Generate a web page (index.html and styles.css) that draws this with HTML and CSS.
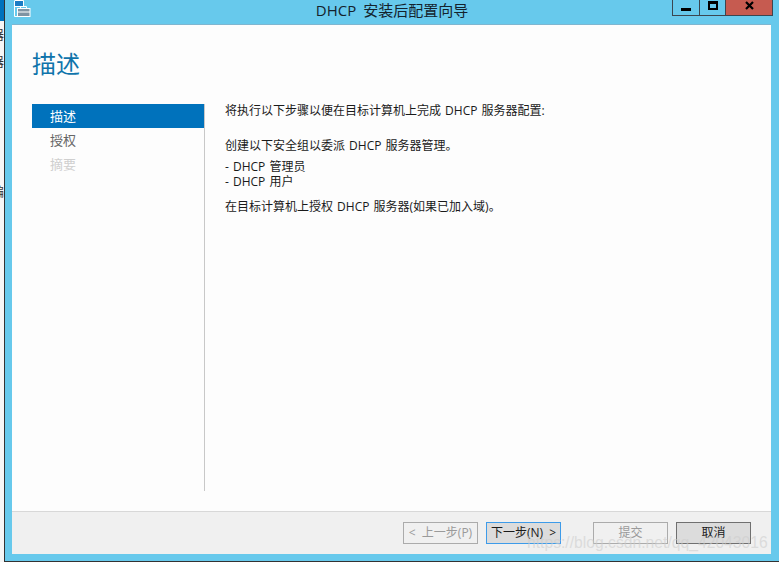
FILE: index.html
```html
<!DOCTYPE html>
<html lang="zh-CN">
<head>
<meta charset="utf-8">
<title>DHCP 安装后配置向导</title>
<link rel="stylesheet" href="styles.css">
</head>
<body>
<div class="desktop">
  <div class="strip">
    <div class="strip-top"></div>
    <span class="frag frag-a">器</span>
    <span class="frag frag-b">器</span>
    <span class="frag frag-c">编</span>
  </div>
  <div class="window">
    <header class="titlebar">
      <svg class="app-icon" width="17" height="17" viewBox="0 0 17 17" aria-hidden="true">
        <rect x="1" y="1" width="8" height="6" fill="#1b7cc4"/>
        <path d="M.5 1V16.500H3.500M.5 .5H9.500V6M1 6.500H9" fill="none" stroke="#fff"/>
        <rect x="3.500" y="8.500" width="12.500" height="8" fill="#7f93a3" stroke="#fff"/>
        <path d="M6.500 8.500V6.500H12.500V8.500" fill="none" stroke="#fff"/>
        <path d="M4 12H16" stroke="#fff"/>
      </svg>
      <div class="title">DHCP 安装后配置向导</div>
      <div class="controls">
        <div class="ctl ctl-min"><span class="min-glyph"></span></div>
        <div class="ctl ctl-max"><span class="max-glyph"></span></div>
        <div class="ctl ctl-close">
          <svg width="9" height="9" viewBox="0 0 9 9" aria-hidden="true"><path d="M1 1l7 7M8 1L1 8" stroke="#000" stroke-width="2.200"/></svg>
        </div>
      </div>
    </header>
    <div class="client">
      <main class="main">
        <h1 class="heading">描述</h1>
        <div class="columns">
          <nav class="nav">
            <div class="nav-item nav-active">描述</div>
            <div class="nav-item nav-normal">授权</div>
            <div class="nav-item nav-disabled">摘要</div>
          </nav>
          <section class="content">
            <p class="line first">将执行以下步骤以便在目标计算机上完成 DHCP 服务器配置:</p>
            <p class="line second">创建以下安全组以委派 DHCP 服务器管理。</p>
            <div class="list">
              <p class="line">- DHCP 管理员</p>
              <p class="line">- DHCP 用户</p>
            </div>
            <p class="line last">在目标计算机上授权 DHCP 服务器(如果已加入域)。</p>
          </section>
        </div>
      </main>
      <footer class="footer">
        <button class="btn btn-disabled" type="button">&lt; 上一步(P)</button>
        <button class="btn btn-focus" type="button">下一步(N) &gt;</button>
        <button class="btn btn-disabled btn-commit" type="button">提交</button>
        <button class="btn btn-cancel" type="button">取消</button>
      </footer>
    </div>
    <div class="watermark">https://blog.csdn.net/qq_42043016</div>
  </div>
</div>
</body>
</html>
```
FILE: styles.css
```css
* { box-sizing: border-box; }
html, body { margin: 0; padding: 0; width: 779px; height: 562px; overflow: hidden; }
body { font-family: "Open Sans", "Noto Sans CJK SC", sans-serif; font-size: 12px; color: #1a1a1a; }
.desktop { display: flex; width: 779px; height: 562px; background: #f6f6f6; }
.strip { position: relative; width: 4px; flex: none; overflow: hidden; background: #f6f6f6; }
.strip-top { height: 21px; background: #0072bc; }
.frag { position: absolute; left: -9px; font-size: 13px; line-height: 13px; color: #333; }
.frag-a { top: 28px; }
.frag-b { top: 55px; }
.frag-c { top: 185px; }
.window {
  position: relative; flex: 1; display: flex; flex-direction: column;
  background: #67c9ec; border-left: 1px solid #333; border-bottom: 1px solid #333;
}
.titlebar { position: relative; height: 25px; flex: none; }
.app-icon { position: absolute; left: 9px; top: 0; }
.title { text-align: center; font-size: 15px; line-height: 20px; color: #14222c; word-spacing: 3px; }
.controls { position: absolute; left: 667px; top: 0; display: flex; height: 16px; border: 1px solid #3b4650; border-top: 0; }
.ctl { display: flex; align-items: center; justify-content: center; height: 15px; }
.ctl-min { width: 27px; border-right: 1px solid #3b4650; }
.ctl-max { width: 26px; border-right: 1px solid #3b4650; }
.ctl-close { width: 46px; background: #c65b50; }
.min-glyph { width: 10px; height: 3px; background: #000; margin-top: 3px; }
.max-glyph { width: 10px; height: 9px; border: 2px solid #000; border-top-width: 3px; margin-top: -4px; }
.ctl-close svg { margin-top: -4px; }
.client {
  flex: 1; margin: 0 8px 7px 7px; display: flex; flex-direction: column;
  background: #fdfdfd; box-shadow: 0 -1px 0 #7fb6d0;
}
.main { flex: 1; display: flex; flex-direction: column; padding: 0 20px; }
.heading { margin: 22px 0 0; height: 57px; font-size: 24px; line-height: 34px; font-weight: 400; color: #0f74ab; }
.columns { display: flex; height: 387px; }
.nav { width: 173px; flex: none; border-right: 1px solid #c8c8c8; }
.nav-item { height: 24px; line-height: 24px; font-size: 13px; padding-left: 18px; }
.nav-active { background: #0072bc; color: #fff; }
.nav-normal { color: #666; }
.nav-disabled { color: #cfcfcf; }
.content { padding-left: 20px; }
.line { margin: 0; font-size: 12px; line-height: 15px; color: #1a1a1a; white-space: nowrap; word-spacing: 1px; }
.first { margin-top: -1px; }
.second { margin-top: 20px; }
.list { margin-top: 6px; }
.last { margin-top: 10px; }
.footer {
  height: 43px; flex: none; display: flex; justify-content: flex-end; align-items: flex-start;
  padding: 10px 20px 0 0; background: #f0f0f0; border-top: 1px solid #d8d8d8;
}
.btn {
  width: 75px; height: 22px; padding: 0; font: inherit; font-size: 12px; line-height: 18px;
  margin-left: 8px; background: #f0f0f0; border: 1px solid #ababab; color: #1a1a1a; word-spacing: 3px;
}
.btn-disabled { color: #9a9a9a; }
.btn-focus { background: #dcdcdc; border-color: #3d9be9; }
.btn-commit { margin-left: 32px; }
.btn-cancel { background: #dcdcdc; border-color: #707070; }
.watermark {
  position: absolute; left: 522px; top: 534px;
  font-family: "Liberation Sans", sans-serif; font-size: 15.700px; line-height: 18px;
  color: rgba(205, 205, 205, .6); white-space: nowrap;
}
```
